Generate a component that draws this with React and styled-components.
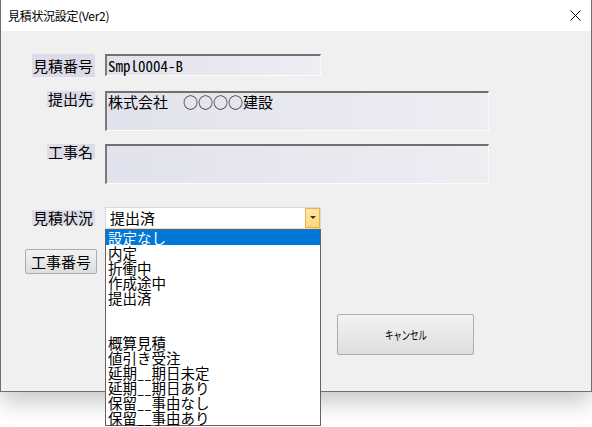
import React from "react";
import styled, { createGlobalStyle } from "styled-components";

const Global = createGlobalStyle`
  html, body { margin: 0; padding: 0; background: #ffffff; overflow: hidden; }
  body { font-family: "Noto Sans CJK JP", "Noto Sans", sans-serif; }
  #root { width: 592px; height: 427px; }
`;

const MONO = `"Noto Sans Mono CJK JP", "Noto Sans CJK JP", monospace`;

const Window = styled.div`
  width: 592px;
  height: 392px;
  box-sizing: border-box;
  border-left: 1px solid #6f6f6f;
  border-right: 1px solid #6f6f6f;
  border-bottom: 1px solid #6f6f6f;
  box-shadow: 0 10px 22px rgba(0, 0, 0, 0.22);
  display: flex;
  flex-direction: column;
  background: #f0f0f0;
`;

const TitleBar = styled.div`
  height: 31px;
  flex: none;
  background: #ffffff;
  display: flex;
  align-items: center;
  justify-content: space-between;
  padding: 0 10px 0 7px;
`;

const Title = styled.span`
  font-family: "Noto Sans CJK JP", sans-serif;
  font-size: 12px;
  line-height: 14px;
  color: #000;
  letter-spacing: -0.3px;
`;

const CloseIcon = () => (
  <svg width="11" height="11" viewBox="0 0 11 11">
    <path d="M0.5 0.5 L10.5 10.5 M10.5 0.5 L0.5 10.5" stroke="#000" strokeWidth="1" fill="none" />
  </svg>
);

const Body = styled.div`
  flex: 1;
  padding: 23px 0 0 24px;
  display: flex;
  flex-direction: column;
  align-items: flex-start;
`;

const Row = styled.div`
  display: flex;
  align-items: ${(p) => (p.$center ? "center" : "flex-start")};
  gap: 10px;
  margin-top: ${(p) => p.$mt || 0}px;
`;

const LabelCell = styled.div`
  width: 70px;
  display: flex;
  justify-content: flex-end;
`;

const Label = styled.span`
  background: #dcdce8;
  font-family: ${MONO};
  font-size: 15px;
  line-height: ${(p) => (p.$tall ? 23 : 15)}px;
  height: ${(p) => (p.$tall ? 23 : 15)}px;
  padding: 0 2px 0 1px;
  color: #000;
  white-space: nowrap;
`;

const TextBox = styled.div`
  box-sizing: border-box;
  width: ${(p) => p.$w}px;
  height: ${(p) => p.$h}px;
  border-style: solid;
  border-width: 2px 1px 1px 2px;
  border-color: #707070 #fbfbfb #fbfbfb #7a7a7a;
  background: linear-gradient(to right, #e2e2ec, #eeedf2);
  font-family: ${MONO};
  font-size: 15px;
  line-height: ${(p) => (p.$single ? 18 : 17)}px;
  padding: ${(p) => (p.$single ? "1px 0 0 1px" : "0 0 0 1px")};
  color: #000;
  white-space: pre;
`;

const ComboWrap = styled.div`
  position: relative;
  width: 216px;
  height: 21px;
`;

const Combo = styled.div`
  box-sizing: border-box;
  width: 216px;
  height: 22px;
  border: 1px solid #d5dae6;
  background: #ffffff;
  display: flex;
  align-items: stretch;
`;

const ComboText = styled.span`
  flex: 1;
  font-family: ${MONO};
  font-size: 15px;
  line-height: 20px;
  padding-left: 4px;
  color: #000;
`;

const ArrowBtn = styled.div`
  width: 15px;
  box-sizing: border-box;
  border: 1px solid #e7b24f;
  background: linear-gradient(#ffe6a3, #ffd778);
  display: flex;
  align-items: center;
  justify-content: center;
`;

const List = styled.div`
  position: absolute;
  top: 22px;
  left: 0;
  width: 216px;
  box-sizing: border-box;
  border: 1px solid #646464;
  background: #ffffff;
  z-index: 5;
`;

const Item = styled.div`
  height: 15px;
  line-height: 15px;
  font-family: ${MONO};
  font-size: 14.5px;
  padding-left: 2px;
  white-space: pre;
  color: ${(p) => (p.$selected ? "#ffffff" : "#000000")};
  background: ${(p) => (p.$selected ? "#0078d7" : "transparent")};
`;

const Button = styled.button`
  box-sizing: border-box;
  width: ${(p) => p.$w}px;
  height: ${(p) => p.$h}px;
  margin-top: ${(p) => p.$mt || 0}px;
  margin-left: ${(p) => p.$ml || 0}px;
  border: 1px solid #adadad;
  border-radius: 2px;
  background: linear-gradient(#f2f2f2, #dedede);
  padding: 0;
  color: #000;
  font-family: ${MONO};
  font-size: ${(p) => p.$fs || 15}px;
  line-height: 1;
  display: flex;
  align-items: center;
  justify-content: center;
`;

const Narrow = styled.span`
  display: inline-block;
  font-family: "Noto Sans CJK JP", sans-serif;
  font-size: 12px;
  transform: scaleX(0.72);
  letter-spacing: -0.5px;
`;

const items = [
  "設定なし",
  "内定",
  "折衝中",
  "作成途中",
  "提出済",
  "",
  "",
  "概算見積",
  "値引き受注",
  "延期__期日未定",
  "延期__期日あり",
  "保留__事由なし",
  "保留__事由あり",
];

export default function App() {
  return (
    <>
      <Global />
      <Window>
        <TitleBar>
          <Title>見積状況設定(Ver2)</Title>
          <CloseIcon />
        </TitleBar>
        <Body>
          <Row>
            <LabelCell>
              <Label $tall>見積番号</Label>
            </LabelCell>
            <TextBox $w={216} $h={22} $single>Smpl0004-B</TextBox>
          </Row>
          <Row $mt={14}>
            <LabelCell>
              <Label>提出先</Label>
            </LabelCell>
            <TextBox $w={384} $h={40}>株式会社　○○○○建設</TextBox>
          </Row>
          <Row $mt={13}>
            <LabelCell>
              <Label>工事名</Label>
            </LabelCell>
            <TextBox $w={384} $h={40} />
          </Row>
          <Row $mt={23} $center>
            <LabelCell>
              <Label>見積状況</Label>
            </LabelCell>
            <ComboWrap>
              <Combo>
                <ComboText>提出済</ComboText>
                <ArrowBtn>
                  <svg width="6" height="4" viewBox="0 0 6 4">
                    <path d="M0 0 H6 L3 3 Z" fill="#333" />
                  </svg>
                </ArrowBtn>
              </Combo>
              <List>
                {items.map((t, i) => (
                  <Item key={i} $selected={i === 0}>
                    {t}
                  </Item>
                ))}
              </List>
            </ComboWrap>
          </Row>
          <Button $w={72} $h={25} $mt={21}>工事番号</Button>
          <Button $w={137} $h={41} $mt={40} $ml={312}>
            <Narrow>キャンセル</Narrow>
          </Button>
        </Body>
      </Window>
    </>
  );
}
